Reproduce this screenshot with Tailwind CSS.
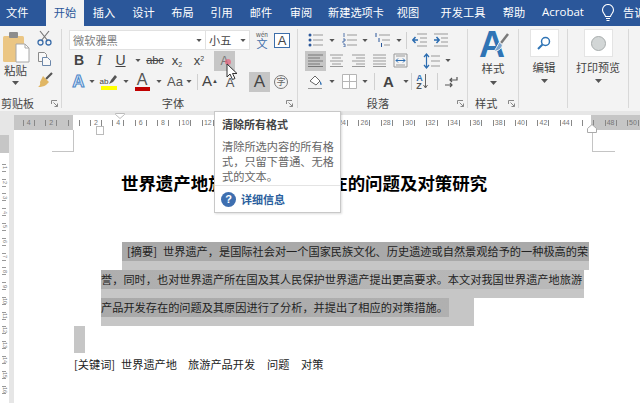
<!DOCTYPE html>
<html lang="zh">
<head>
<meta charset="utf-8">
<title>Word</title>
<script src="https://cdn.jsdelivr.net/npm/@tailwindcss/browser@4"></script>
</head>
<body class="bg-white">
<div class="relative w-[640px] h-[403px] overflow-hidden font-['Noto_Sans_CJK_SC','Liberation_Sans',sans-serif] text-[#333]">

  <!-- tabs -->
  <div class="flex h-[26px] bg-[#2b579a] text-white text-[11.2px] leading-[24px] whitespace-nowrap text-center">
    <div class="w-[46px] pl-[6px] pr-[18px]">文件</div>
    <div class="w-[38px] bg-[#f3f3f3] text-[#2b579a]">开始</div>
    <div class="w-[40px]">插入</div>
    <div class="w-[39px]">设计</div>
    <div class="w-[39px]">布局</div>
    <div class="w-[39px]">引用</div>
    <div class="w-[40px]">邮件</div>
    <div class="w-[40px]">审阅</div>
    <div class="w-[70px]">新建选项卡</div>
    <div class="w-[34px]">视图</div>
    <div class="w-[76px]">开发工具</div>
    <div class="w-[26px]">帮助</div>
    <div class="w-[72px] font-['Open_Sans',sans-serif] text-[11.5px]">Acrobat</div>
    <div class="w-[18px] flex items-center justify-center">
      <svg class="w-[14px] h-[18px]" viewBox="0 0 14 18" fill="none" stroke="#fff" stroke-width="1.1"><path d="M4.5 12.5C4 10 1.5 9 1.5 6a5.5 5.5 0 0 1 11 0c0 3-2.500 4-3 6.500z"/><path d="M5 14.500h4M5.500 16.500h3"/></svg>
    </div>
    <div class="w-[23px] pl-[6px] text-left overflow-hidden">告诉</div>
  </div>

  <!-- ribbon -->
  <div class="flex items-start h-[85px] pt-[3px] bg-[#f3f3f3] text-[#444]">

    <!-- clipboard -->
    <div class="w-[61px] h-[82px] flex flex-col shrink-0">
      <div class="flex h-[63px] pt-[1px]">
        <div class="w-[31px] flex flex-col items-center">
          <svg class="w-[28px] h-[32px] mt-[1px]" viewBox="0 0 28 32"><rect x="1" y="5" width="21" height="26" rx="1.500" fill="#ebc684"/><rect x="7" y="1" width="9" height="6" rx="1" fill="#8d8d8d"/><path d="M14 13h9l4 4v14H14z" fill="#fff" stroke="#a8a8a8"/><path d="M23 13v4h4" fill="none" stroke="#a8a8a8"/></svg>
          <span class="text-[11.5px] leading-[12px] mt-[1px]">粘贴</span>
          <svg class="w-[7px] h-[4px] mt-[5px]" viewBox="0 0 7 4" fill="#555"><path d="M0 0h7L3.500 4z"/></svg>
        </div>
        <div class="w-[26px] flex flex-col items-center gap-[5px] pl-[1px]">
          <svg class="w-[15px] h-[16px]" viewBox="0 0 15 16" fill="none"><path d="M3 1l8 10M12 1L4 11" stroke="#777" stroke-width="1.200"/><circle cx="3.500" cy="12.500" r="2.500" stroke="#3c6eaa" stroke-width="1.300"/><circle cx="11.500" cy="12.500" r="2.500" stroke="#3c6eaa" stroke-width="1.300"/></svg>
          <svg class="w-[15px] h-[16px]" viewBox="0 0 15 16" fill="#f8f8f8" stroke="#8a8a8a"><path d="M1.500 1.500h6l2 2v7h-8z"/><path d="M5.500 6.500h5l3 3v5h-8z" stroke="#6c87aa"/></svg>
          <svg class="w-[16px] h-[16px]" viewBox="0 0 16 16"><path d="M9 7l6-6" stroke="#555" stroke-width="2.200"/><path d="M6 4l6 6-3 3c-2 1.500-5 2-8 2 2-1 2.500-3 2-5z" fill="#e0b664"/></svg>
        </div>
      </div>
      <div class="flex justify-between items-center h-[16px] mt-[3px] pl-[1px] pr-[3px]">
        <span class="text-[11px] whitespace-nowrap">剪贴板</span>
        <svg class="w-[7px] h-[7px]" viewBox="0 0 7 7" fill="none" stroke="#888"><path d="M.5 4V.5H6M2.500 2.500L6.500 6.500M6.500 3.500v3h-3"/></svg>
      </div>
    </div>
    <div class="w-px h-[79px] bg-[#d8d8d8] shrink-0"></div>

    <!-- font -->
    <div class="w-[235px] h-[82px] flex flex-col pl-[7px] shrink-0">
      <div class="flex items-center h-[20px] mt-[1px]">
        <div class="w-[137px] h-[20px] bg-white border border-[#e1e1e1] flex items-center justify-between pl-[3px] pr-[3px] text-[11.2px] text-[#808080]">微软雅黑
          <svg class="w-[6px] h-[3px]" viewBox="0 0 7 4" fill="#555"><path d="M0 0h7L3.500 4z"/></svg></div>
        <div class="w-[44px] h-[20px] bg-white border border-l-0 border-[#e1e1e1] flex items-center justify-between pl-[3px] pr-[3px] text-[11.2px]">小五
          <svg class="w-[6px] h-[3px]" viewBox="0 0 7 4" fill="#555"><path d="M0 0h7L3.500 4z"/></svg></div>
        <div class="w-[22px] flex flex-col items-center text-[#3c6eaa] ml-px">
          <span class="text-[6px] leading-[7px] text-[#555]">wén</span>
          <span class="text-[11px] leading-[11px]">文</span>
        </div>
        <div class="w-[16px] h-[15px] border border-[#3c6eaa] bg-white flex items-center justify-center ml-px font-['Liberation_Sans'] text-[13px] leading-none text-[#444]">A</div>
      </div>
      <div class="flex items-center h-[21px] font-['Liberation_Sans'] text-[#444]">
        <div class="w-[20px] text-center font-bold text-[14px]">B</div>
        <div class="w-[21px] text-center italic font-['Liberation_Serif'] text-[15px]">I</div>
        <div class="w-[21px] text-center underline text-[14px]">U</div>
        <div class="w-[14px] flex justify-center"><svg class="w-[6px] h-[3px]" viewBox="0 0 7 4" fill="#555"><path d="M0 0h7L3.500 4z"/></svg></div>
        <div class="w-[20px] text-center text-[11px] line-through">abc</div>
        <div class="w-[24px] text-center text-[13px]">x<sub class="text-[7px]">2</sub></div>
        <div class="w-[20px] text-center text-[13px]">x<sup class="text-[7px]">2</sup></div>
        <div class="w-[21px] h-[20px] ml-[5px] bg-[#c6c6c6] flex items-center justify-center text-[12px] text-[#777]">A</div>
      </div>
      <div class="flex items-center h-[21px] font-['Liberation_Sans']">
        <div class="w-[19px] text-center font-bold text-[17px] leading-none text-[#dbe8f8] [-webkit-text-stroke:1px_#4a86c8]">A</div>
        <div class="w-[8px] flex justify-center"><svg class="w-[6px] h-[3px]" viewBox="0 0 7 4" fill="#555"><path d="M0 0h7L3.500 4z"/></svg></div>
        <div class="w-[26px] flex flex-col items-center">
          <div class="flex items-end h-[13px] text-[8px] leading-[9px]">ab<svg class="w-[10px] h-[12px]" viewBox="0 0 10 12"><path d="M1 10l2-4 4-5 2 2-4 5z" fill="#555"/></svg></div>
          <div class="w-[16px] h-[4px] bg-[#ffff00]"></div>
        </div>
        <div class="w-[8px] flex justify-center"><svg class="w-[6px] h-[3px]" viewBox="0 0 7 4" fill="#555"><path d="M0 0h7L3.500 4z"/></svg></div>
        <div class="w-[24px] flex flex-col items-center">
          <span class="text-[16px] leading-[14px] text-[#555]">A</span>
          <div class="w-[15px] h-[4px] bg-[#c00000]"></div>
        </div>
        <div class="w-[10px] flex justify-center"><svg class="w-[6px] h-[3px]" viewBox="0 0 7 4" fill="#555"><path d="M0 0h7L3.500 4z"/></svg></div>
        <div class="w-[22px] text-center text-[13px] text-[#555]">Aa</div>
        <div class="w-[6px] flex justify-center"><svg class="w-[6px] h-[3px]" viewBox="0 0 7 4" fill="#555"><path d="M0 0h7L3.500 4z"/></svg></div>
        <div class="w-[10px] flex justify-center"><div class="w-px h-[16px] bg-[#d0d0d0]"></div></div>
        <div class="w-[16px] text-center text-[15px]">A<sup class="text-[6px]">▲</sup></div>
        <div class="w-[24px] text-center text-[13px] pt-[3px] text-[#555]">A</div>
        <div class="w-[21px] h-[20px] ml-[7px] bg-[#c6c6c6] flex items-center justify-center text-[17px] font-medium">A</div>
        <div class="w-[20px] ml-[1px] flex justify-center">
          <div class="w-[14px] h-[14px] rounded-full border border-[#777] flex items-center justify-center text-[9px] leading-none text-[#666] font-['Noto_Sans_CJK_SC']">字</div>
        </div>
      </div>
      <div class="relative flex justify-center items-center h-[16px] mt-[3px] pr-[20px]">
        <span class="text-[11.2px]">字体</span>
        <svg class="absolute right-[4px] top-[5px] w-[7px] h-[7px]" viewBox="0 0 7 7" fill="none" stroke="#888"><path d="M.5 4V.5H6M2.500 2.500L6.500 6.500M6.500 3.500v3h-3"/></svg>
      </div>
    </div>
    <div class="w-px h-[79px] bg-[#d8d8d8] shrink-0"></div>

    <!-- paragraph -->
    <div class="w-[169px] h-[82px] flex flex-col pl-[7px] shrink-0">
      <div class="flex items-center h-[20px] mt-[1px]">
        <div class="w-[21px] flex justify-center"><svg class="w-[15px] h-[14px]" viewBox="0 0 15 14"><path d="M5 2h10M5 7h10M5 12h10" stroke="#999"/><circle cx="2" cy="2" r="1.500" fill="#2b579a"/><circle cx="2" cy="7" r="1.500" fill="#2b579a"/><circle cx="2" cy="12" r="1.500" fill="#2b579a"/></svg></div>
        <div class="w-[12px] flex justify-center"><svg class="w-[6px] h-[3px]" viewBox="0 0 7 4" fill="#555"><path d="M0 0h7L3.500 4z"/></svg></div>
        <div class="w-[22px] flex justify-center"><svg class="w-[15px] h-[14px]" viewBox="0 0 15 14"><path d="M5 2h10M5 7h10M5 12h10" stroke="#999"/><path d="M2 0v4M1 6h2v2H1v2M1 11h2v3H1" stroke="#2b579a" fill="none" stroke-width=".8"/></svg></div>
        <div class="w-[10px] flex justify-center"><svg class="w-[6px] h-[3px]" viewBox="0 0 7 4" fill="#555"><path d="M0 0h7L3.500 4z"/></svg></div>
        <div class="w-[24px] flex justify-center"><svg class="w-[15px] h-[14px]" viewBox="0 0 15 14"><path d="M4 2h11M7 7h8M9 12h6" stroke="#999"/><path d="M1 0v4M4 5v4M6.500 10v4" stroke="#2b579a"/></svg></div>
        <div class="w-[9px] flex justify-center"><svg class="w-[6px] h-[3px]" viewBox="0 0 7 4" fill="#555"><path d="M0 0h7L3.500 4z"/></svg></div>
        <div class="w-[2px] ml-[2px] flex justify-center"><div class="w-px h-[17px] bg-[#d0d0d0]"></div></div>
        <div class="w-[21px] ml-[2px] flex justify-center"><svg class="w-[15px] h-[14px]" viewBox="0 0 15 14"><path d="M5 1h10M8 5h7M8 9h7M5 13h10" stroke="#999"/><path d="M6 7H1M3.500 4L.8 7l2.700 3" stroke="#2b6cb0" stroke-width="1.500" fill="none"/></svg></div>
        <div class="w-[21px] flex justify-center"><svg class="w-[15px] h-[14px]" viewBox="0 0 15 14"><path d="M1 1h14M8 5h7M8 9h7M1 13h14" stroke="#999"/><path d="M1 7h5M3.500 4L6.200 7l-2.700 3" stroke="#2b6cb0" stroke-width="1.500" fill="none"/></svg></div>
      </div>
      <div class="flex items-center h-[21px]">
        <div class="w-[21px] h-[20px] bg-[#c6c6c6] flex justify-center items-center"><svg class="w-[15px] h-[13px]" viewBox="0 0 15 13"><path d="M0 1h15M0 4h12M0 7h15M0 10h12M0 12.500h15" stroke="#777"/></svg></div>
        <div class="w-[21px] flex justify-center"><svg class="w-[13px] h-[13px]" viewBox="0 0 13 13"><path d="M0 1h13M2 4h9M0 7h13M2 10h9M0 12.500h13" stroke="#999"/></svg></div>
        <div class="w-[22px] flex justify-center"><svg class="w-[13px] h-[13px]" viewBox="0 0 13 13"><path d="M0 1h13M4 4h9M0 7h13M4 10h9M0 12.500h13" stroke="#999"/></svg></div>
        <div class="w-[21px] flex justify-center"><svg class="w-[13px] h-[13px]" viewBox="0 0 13 13"><path d="M0 1h13M0 4h13M0 7h13M0 10h13M0 12.500h13" stroke="#999"/></svg></div>
        <div class="w-[21px] flex justify-center"><svg class="w-[15px] h-[15px]" viewBox="0 0 15 15" fill="none"><path d="M1 1h13v13H1zM3 3h9M3 12h9" stroke="#999"/><path d="M3 7.500h9M3 7.500l2-2M3 7.500l2 2M12 7.500l-2-2M12 7.500l-2 2" stroke="#2b6cb0"/></svg></div>
        <div class="w-[6px]"></div>
        <div class="w-[28px] flex justify-center"><svg class="w-[17px] h-[16px]" viewBox="0 0 17 16" fill="none"><path d="M8 3h9M8 8h9M8 13h9" stroke="#999"/><path d="M3.500 1v14M1 4l2.500-3L6 4M1 12l2.500 3L6 12" stroke="#2b6cb0" stroke-width="1.200"/></svg></div>
        <div class="w-[6px] flex justify-center"><svg class="w-[6px] h-[3px]" viewBox="0 0 7 4" fill="#555"><path d="M0 0h7L3.500 4z"/></svg></div>
      </div>
      <div class="flex items-center h-[21px]">
        <div class="w-[21px] flex justify-center"><svg class="w-[17px] h-[17px]" viewBox="0 0 17 17" fill="none"><path d="M1 15.500h14" stroke="#999"/><path d="M3 8l5-5 5 5-4 4z" fill="#fff" stroke="#666"/><path d="M13 8c2 2 2 4 1 4s-1-2-1-4z" fill="#2b6cb0"/></svg></div>
        <div class="w-[12px] flex justify-center"><svg class="w-[6px] h-[3px]" viewBox="0 0 7 4" fill="#555"><path d="M0 0h7L3.500 4z"/></svg></div>
        <div class="w-[22px] flex justify-center"><svg class="w-[15px] h-[15px]" viewBox="0 0 15 15" fill="#fff" stroke="#b5b5b5"><path d="M.5.500h14v14H.5zM7.500.5v14M.5 7.500h14"/></svg></div>
        <div class="w-[10px] flex justify-center"><svg class="w-[6px] h-[3px]" viewBox="0 0 7 4" fill="#555"><path d="M0 0h7L3.500 4z"/></svg></div>
        <div class="w-[5px] flex justify-end"><div class="w-px h-[17px] bg-[#d0d0d0]"></div></div>
        <div class="w-[24px] flex justify-center font-['Liberation_Sans'] font-bold text-[15px] leading-none text-[#444] pl-[3px]">A</div>
        <div class="w-[3px]"></div>
        <div class="w-[8px] flex justify-center"><svg class="w-[6px] h-[3px]" viewBox="0 0 7 4" fill="#555"><path d="M0 0h7L3.500 4z"/></svg></div>
        <div class="w-[3px] flex justify-center"><div class="w-px h-[17px] bg-[#d0d0d0]"></div></div>
        <div class="w-[18px] flex items-center justify-center font-['Liberation_Sans'] font-bold"><div class="flex flex-col text-[9px] leading-[8px] text-[#2b6cb0]"><span>A</span><span class="text-[#555]">Z</span></div><svg class="w-[5px] h-[15px]" viewBox="0 0 5 15" fill="none" stroke="#666"><path d="M2.500 0v14M.5 11l2 3 2-3"/></svg></div>
        <div class="w-[5px] flex justify-center ml-[4px]"><div class="w-px h-[17px] bg-[#d0d0d0]"></div></div>
        <div class="w-[20px] ml-[1px] flex justify-center"><svg class="w-[14px] h-[12px]" viewBox="0 0 14 12" fill="none" stroke="#555" stroke-width="1.200"><path d="M13 1v3H6M8 2L6 4l2 2M1 9h7M6 7l2 2-2 2"/></svg></div>
      </div>
      <div class="relative flex justify-center items-center h-[16px] mt-[3px] pr-[16px]">
        <span class="text-[11.2px]">段落</span>
        <svg class="absolute right-[3px] top-[5px] w-[7px] h-[7px]" viewBox="0 0 7 7" fill="none" stroke="#888"><path d="M.5 4V.5H6M2.500 2.500L6.500 6.500M6.500 3.500v3h-3"/></svg>
      </div>
    </div>
    <div class="w-px h-[79px] bg-[#d8d8d8] shrink-0"></div>

    <!-- styles -->
    <div class="w-[50px] h-[82px] flex flex-col shrink-0">
      <div class="flex flex-col items-center h-[63px]">
        <div class="relative w-[30px] h-[30px] text-[36px] leading-[32px] font-bold font-['Liberation_Sans'] text-[#2f74b5] pl-[1px]">A
          <svg class="absolute left-[11px] top-[3px] w-[20px] h-[26px]" viewBox="0 0 20 26"><path d="M19 2L12 11" stroke="#7a7a7a" stroke-width="2.500"/><path d="M10.500 10l3 3c-1 4-5 6.500-8.500 6 2-2 3-5 5.500-9z" fill="#7ba3cc" stroke="#f3f3f3"/></svg>
        </div>
        <span class="text-[11.5px] leading-[12px] mt-[3px]">样式</span>
        <svg class="w-[7px] h-[4px] mt-[7px]" viewBox="0 0 7 4" fill="#555"><path d="M0 0h7L3.500 4z"/></svg>
      </div>
      <div class="flex justify-between items-center h-[16px] mt-[3px] pl-[7px] pr-[3px]">
        <span class="text-[11.2px]">样式</span>
        <svg class="w-[7px] h-[7px]" viewBox="0 0 7 7" fill="none" stroke="#888"><path d="M.5 4V.5H6M2.500 2.500L6.500 6.500M6.500 3.500v3h-3"/></svg>
      </div>
    </div>
    <div class="w-px h-[79px] bg-[#d8d8d8] shrink-0"></div>

    <!-- edit -->
    <div class="w-[48px] flex flex-col items-center shrink-0 pl-[2px]">
      <div class="w-[29px] h-[28px] bg-white border border-[#e4e4e4] flex items-center justify-center">
        <svg class="w-[14px] h-[14px]" viewBox="0 0 14 14" fill="none" stroke="#2f74b5" stroke-width="1.500"><circle cx="8.500" cy="5.500" r="4"/><path d="M5.500 8.500L1 13" stroke-width="2"/></svg>
      </div>
      <span class="text-[11.5px] leading-[16px] mt-[2px]">编辑</span>
      <svg class="w-[7px] h-[4px] mt-[4px]" viewBox="0 0 7 4" fill="#555"><path d="M0 0h7L3.500 4z"/></svg>
    </div>
    <div class="w-px h-[79px] bg-[#d8d8d8] shrink-0"></div>

    <!-- print preview -->
    <div class="w-[60px] flex flex-col items-center shrink-0">
      <div class="w-[29px] h-[28px] bg-white border border-[#e4e4e4] flex items-center justify-center">
        <div class="w-[15px] h-[15px] rounded-full bg-[#d2d6d6] border border-[#a8adad]"></div>
      </div>
      <span class="text-[11px] leading-[16px] mt-[2px] whitespace-nowrap">打印预览</span>
      <svg class="w-[7px] h-[4px] mt-[4px]" viewBox="0 0 7 4" fill="#555"><path d="M0 0h7L3.500 4z"/></svg>
    </div>
    <div class="w-px h-[79px] bg-[#d8d8d8] shrink-0"></div>
  </div>

  <!-- horizontal ruler -->
  <div class="h-[19px] bg-[#e6e6e6] pt-[4px] pl-[14px]">
    <div class="flex items-center h-[15px] pl-[3.600px] overflow-hidden bg-[linear-gradient(90deg,#c6c6c6_59px,#fff_59px,#fff_577px,#c6c6c6_577px)] text-[7px] leading-none text-[#777] font-['Liberation_Sans'] [&>i]:not-italic [&>i]:shrink-0 [&>i]:w-[12px] [&>i]:h-[6px] [&>i]:mx-[5.200px] [&>i]:border-x [&>i]:border-[#888] [&>i]:flex [&>i]:items-center [&>i]:justify-center">
      <i>4</i><i>2</i><i></i><i>2</i><i>4</i><i>6</i><i>8</i><i>10</i><i>12</i><i></i><i></i><i></i><i></i><i></i><i>24</i><i>26</i><i>28</i><i>30</i><i>32</i><i>34</i><i>36</i><i>38</i><i>40</i><i>42</i><i>44</i><i></i><i>48</i><i>50</i>
    </div>
  </div>

  <!-- document area -->
  <div class="flex h-[273px]">
    <div class="w-[9px] shrink-0 bg-white flex flex-col overflow-hidden">
      <div class="h-[5px] bg-[#e6e6e6] shrink-0"></div>
      <div class="h-[18px] bg-[#c6c6c6] shrink-0"></div>
      <div class="flex flex-col pt-[7.500px] text-[5.500px] leading-none text-[#777] font-['Liberation_Sans'] [&>i]:not-italic [&>i]:shrink-0 [&>i]:flex [&>i]:items-center [&>i]:justify-center [&>i]:[writing-mode:vertical-rl] [&>i]:w-[4px] [&>i]:h-[8px] [&>i]:mt-[3.400px] [&>i]:mb-[3.400px] [&>i]:ml-[2px] [&>i]:border-t [&>i]:border-b [&>i]:border-[#999]">
        <i>1</i><i>2</i><i>3</i><i>4</i><i>5</i><i>6</i><i>7</i><i>8</i><i>9</i><i>10</i><i>11</i><i>12</i><i>13</i><i>14</i><i>15</i><i>16</i>
      </div>
    </div>
    <div class="w-[5px] shrink-0 bg-[#e6e6e6]"></div>
    <div class="flex-1 bg-white text-[#222]">
      <div class="flex justify-between pl-[38px] pr-[25px]">
        <div class="w-[22px] h-[22px] border-r border-b border-[#c4c4c4]"></div>
        <div class="w-[23px] h-[22px] border-l border-b border-[#c4c4c4]"></div>
      </div>
      <h1 class="ml-[107px] mt-[19px] text-[17.450px] leading-[24px] font-bold text-black whitespace-nowrap">世界遗产地旅游产品开发存在的问题及对策研究</h1>
      <div class="mt-[47px] text-[11.200px] leading-[19px] whitespace-nowrap">
        <div class="ml-[108px] w-[467px] h-[28px] bg-[#c6c6c6]">
          <div class="h-[19px] bg-[#a9a9a9] flex"><span class="ml-[5px] w-[36px]">[摘要]</span><span>世界遗产，是国际社会对一个国家民族文化、历史遗迹或自然景观给予的一种极高的荣</span></div>
        </div>
        <div class="ml-[87px] w-[483px] h-[27.500px] bg-[#c6c6c6]">
          <div class="h-[19px] bg-[linear-gradient(90deg,#aeaeae,#bababa)]">誉，同时，也对世界遗产所在国及其人民保护世界遗产提出更高要求。本文对我国世界遗产地旅游</div>
        </div>
        <div class="ml-[87px] w-[373px] h-[28px] bg-[#c6c6c6]">
          <div class="w-[348px] h-[19px] bg-[linear-gradient(90deg,#a9a9a9,#b0b0b0)]">产品开发存在的问题及其原因进行了分析，并提出了相应的对策措施。</div>
        </div>
        <div class="ml-[60px] w-[11px] h-[27.500px] bg-[#c6c6c6]"></div>
        <div class="ml-[60px] h-[22px] leading-[22px] flex">
          <span class="w-[47px]">[关键词]</span><span class="w-[67px]">世界遗产地</span><span class="w-[79px]">旅游产品开发</span><span class="w-[34px]">问题</span><span>对策</span>
        </div>
      </div>
    </div>
  </div>

  <!-- ruler markers -->
  <svg class="absolute left-[115px] top-[113px] w-[10px] h-[6px]" viewBox="0 0 10 6"><path d="M.5.500h9v1L5 5.500.5 1.500z" fill="#fff" stroke="#bbb"/></svg>
  <div class="absolute left-[96px] top-[126px] w-[8px] h-[9px] bg-white border border-[#bbb]"></div>
  <svg class="absolute left-[587px] top-[124px] w-[10px] h-[9px]" viewBox="0 0 10 9"><path d="M5 .5L9.500 4.500v4h-9v-4z" fill="#fff" stroke="#aaa"/></svg>

  <!-- pressed dot and cursor -->
  <div class="absolute left-[225px] top-[59px] w-[6px] h-[6px] rounded-full bg-[#e8607a]/70"></div>
  <svg class="absolute left-[226px] top-[63px] w-[13px] h-[18px]" viewBox="0 0 13 18"><path d="M1 1v13l3-3 2.500 5.500 2.500-1L6.500 10.500H11z" fill="#fff" stroke="#333"/></svg>

  <!-- tooltip -->
  <div class="absolute left-[214px] top-[111px] w-[127px] h-[102px] bg-white border border-[#c8c8c8] shadow-[1px_1px_2px_#0002] flex flex-col">
    <div class="pl-[7px] pt-[4px] h-[24px] text-[11px] leading-[16px] font-bold text-[#444] whitespace-nowrap">清除所有格式</div>
    <div class="pl-[7px] pt-[3px] h-[50px] text-[11.200px] leading-[15px] text-[#666]">清除所选内容的所有格<br>式，只留下普通、无格<br>式的文本。</div>
    <div class="h-px bg-[#e4e4e4] mt-[0px]"></div>
    <div class="flex items-center gap-[5px] pl-[6px] h-[26px]">
      <div class="w-[15px] h-[15px] rounded-full bg-[#3e6fb0] text-white text-[11px] font-bold leading-none flex items-center justify-center font-['Liberation_Sans']">?</div>
      <span class="text-[11px] font-bold text-[#2b5f9e] whitespace-nowrap">详细信息</span>
    </div>
  </div>
</div>
</body>
</html>
